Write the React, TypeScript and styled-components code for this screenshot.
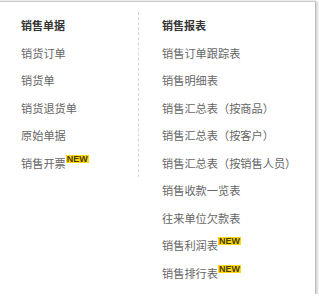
import React from "react";
import styled, { createGlobalStyle } from "styled-components";

const GlobalStyle = createGlobalStyle`
  html, body {
    margin: 0;
    padding: 0;
    background: #ffffff;
    overflow: hidden;
  }
  body {
    font-family: "Noto Sans CJK SC", "Noto Sans", sans-serif;
  }
`;

const Menu = styled.div`
  display: flex;
  align-items: flex-start;
  width: 327px;
  height: 282px;
  margin: 2px 0 0 -12px;
  padding-top: 10px;
  background: #ffffff;
  box-shadow: 0 0 1px 1px rgba(0, 0, 0, 0.12), 1px 1px 3px 2px rgba(0, 0, 0, 0.16);
`;

const Column = styled.div<{ $divider?: boolean; $width?: number; $pad: number }>`
  display: flex;
  flex-direction: column;
  width: ${(p) => (p.$width ? `${p.$width}px` : "auto")};
  padding-left: ${(p) => p.$pad}px;
  border-right: ${(p) => (p.$divider ? "1px dashed #d6d6d6" : "none")};
`;

const Title = styled.div`
  height: 27.5px;
  line-height: 27.5px;
  font-size: 11px;
  font-weight: bold;
  color: #333333;
  white-space: nowrap;
`;

const Item = styled.div`
  display: flex;
  align-items: flex-start;
  height: 27.5px;
  line-height: 27.5px;
  font-size: 11.2px;
  color: #666666;
  white-space: nowrap;
`;

const NewTag = styled.span`
  margin-top: 5px;
  padding: 0 1px;
  height: 8px;
  line-height: 8px;
  font-family: "Liberation Sans", Arial, sans-serif;
  font-size: 9px;
  font-weight: bold;
  color: #4a3c00;
  background: #ffd814;
`;

type Entry = { label: string; isNew?: boolean };

const docs: Entry[] = [
  { label: "销货订单" },
  { label: "销货单" },
  { label: "销货退货单" },
  { label: "原始单据" },
  { label: "销售开票", isNew: true },
];

const reports: Entry[] = [
  { label: "销售订单跟踪表" },
  { label: "销售明细表" },
  { label: "销售汇总表（按商品）" },
  { label: "销售汇总表（按客户）" },
  { label: "销售汇总表（按销售人员）" },
  { label: "销售收款一览表" },
  { label: "往来单位欠款表" },
  { label: "销售利润表", isNew: true },
  { label: "销售排行表", isNew: true },
];

function App() {
  return (
    <>
      <GlobalStyle />
      <Menu>
        <Column $divider $width={117} $pad={33}>
          <Title>销售单据</Title>
          {docs.map((d) => (
            <Item key={d.label}>
              {d.label}
              {d.isNew && <NewTag>NEW</NewTag>}
            </Item>
          ))}
        </Column>
        <Column $pad={23}>
          <Title>销售报表</Title>
          {reports.map((r) => (
            <Item key={r.label}>
              {r.label}
              {r.isNew && <NewTag>NEW</NewTag>}
            </Item>
          ))}
        </Column>
      </Menu>
    </>
  );
}

export default App;
